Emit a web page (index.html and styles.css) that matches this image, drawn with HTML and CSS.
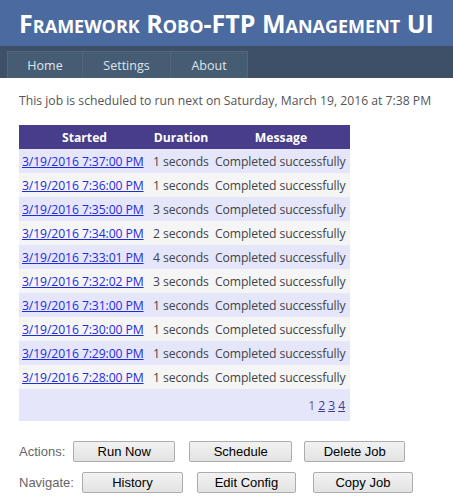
FILE: index.html
```html
<!DOCTYPE html>
<html>
<head>
<meta charset="utf-8">
<link rel="stylesheet" href="styles.css">
</head>
<body>
<div class="header">
  <h1 class="title">Framework Robo-FTP Management UI</h1>
</div>
<div class="navbar">
  <ul class="menu">
    <li><a href="#">Home</a></li>
    <li><a href="#">Settings</a></li>
    <li><a href="#">About</a></li>
  </ul>
</div>
<div class="main">
  <p class="next">This job is scheduled to run next on Saturday, March 19, 2016 at 7:38 PM</p>
  <table class="grid">
    <thead>
      <tr><th class="c1">Started</th><th class="c2">Duration</th><th class="c3">Message</th></tr>
    </thead>
    <tbody>
      <tr class="odd"><td><a href="#">3/19/2016 7:37:00 PM</a></td><td>1 seconds</td><td>Completed successfully</td></tr>
      <tr class="even"><td><a href="#">3/19/2016 7:36:00 PM</a></td><td>1 seconds</td><td>Completed successfully</td></tr>
      <tr class="odd"><td><a href="#">3/19/2016 7:35:00 PM</a></td><td>3 seconds</td><td>Completed successfully</td></tr>
      <tr class="even"><td><a href="#">3/19/2016 7:34:00 PM</a></td><td>2 seconds</td><td>Completed successfully</td></tr>
      <tr class="odd"><td><a href="#">3/19/2016 7:33:01 PM</a></td><td>4 seconds</td><td>Completed successfully</td></tr>
      <tr class="even"><td><a href="#">3/19/2016 7:32:02 PM</a></td><td>3 seconds</td><td>Completed successfully</td></tr>
      <tr class="odd"><td><a href="#">3/19/2016 7:31:00 PM</a></td><td>1 seconds</td><td>Completed successfully</td></tr>
      <tr class="even"><td><a href="#">3/19/2016 7:30:00 PM</a></td><td>1 seconds</td><td>Completed successfully</td></tr>
      <tr class="odd"><td><a href="#">3/19/2016 7:29:00 PM</a></td><td>1 seconds</td><td>Completed successfully</td></tr>
      <tr class="even"><td><a href="#">3/19/2016 7:28:00 PM</a></td><td>1 seconds</td><td>Completed successfully</td></tr>
      <tr class="pager"><td colspan="3"><span>1</span> <a href="#">2</a> <a href="#">3</a> <a href="#">4</a></td></tr>
    </tbody>
  </table>
  <div class="actions">
    <div class="row"><span class="label">Actions:</span><button class="btn b1">Run Now</button><button class="btn b2">Schedule</button><button class="btn b3">Delete Job</button></div>
    <div class="row"><span class="label">Navigate:</span><button class="btn b4">History</button><button class="btn b5">Edit Config</button><button class="btn b6">Copy Job</button></div>
  </div>
</div>
</body>
</html>
```
FILE: styles.css
```css
* { box-sizing: border-box; }
html, body { margin: 0; padding: 0; background: #fff; }
body { font-family: "Open Sans", "Noto Sans", sans-serif; font-size: 12px; color: #505050; }
.header { background: #4b6ba0; height: 46px; display: flex; align-items: center; justify-content: center; }
.title { margin: 0; color: #fff; font-variant: small-caps; font-weight: bold; font-size: 25px; letter-spacing: 0; line-height: 1; padding-top: 1px; }
.navbar { background: #3d5068; height: 32px; padding: 5px 0 0 7px; }
.menu { list-style: none; margin: 0; padding: 0; display: flex; height: 27px; }
.menu li { display: flex; }
.menu a { display: flex; align-items: center; justify-content: center; height: 27px; background: #465c73; border: 1px solid #52677d; border-bottom: none; color: #dde6ee; text-decoration: none; font-size: 12.5px; }
.menu li + li a { border-left: none; }
.menu li:nth-child(1) a { width: 76px; }
.menu li:nth-child(2) a { width: 88px; }
.menu li:nth-child(3) a { width: 77px; }
.main { padding: 0 19px; }
.next { margin: 14px 0 16px; line-height: 17px; font-size: 12.2px; color: #555; white-space: nowrap; letter-spacing: 0; }
.grid { border-collapse: collapse; width: 331px; }
.grid th { background: #483d8b; color: #fff; font-weight: bold; height: 24px; padding: 0; font-size: 12.2px; text-align: center; }
.grid th.c1 { width: 131px; }
.grid th.c2 { width: 62px; }
.grid td { height: 24px; padding: 0 3px; font-size: 12.2px; white-space: nowrap; color: #444; letter-spacing: -0.1px; }
.grid tr.odd td { background: #e6e6fa; }
.grid tr.even td { background: #f5f5f5; }
.grid td a { color: #1e2be0; }
.grid tr.pager td { background: #e6e6fa; height: 32px; text-align: right; padding-right: 5px; color: #666; }
.grid tr.pager a { color: #3c3c94; }
.actions { margin-top: 20px; display: flex; flex-direction: column; gap: 10px; }
.row { display: flex; align-items: center; }
.label { font-family: "Liberation Sans", Arial, sans-serif; font-size: 13px; color: #666; }
.btn { font-family: "Liberation Sans", Arial, sans-serif; font-size: 13px; color: #000; height: 21px; padding: 0; background: linear-gradient(#f2f2f2, #e3e3e3); border: 1px solid #acacac; border-radius: 2px; }
.b1 { width: 102px; margin-left: 8px; }
.b2 { width: 103px; margin-left: 14px; }
.b3 { width: 101px; margin-left: 12px; }
.b4 { width: 101px; margin-left: 8px; }
.b5 { width: 99px; margin-left: 14px; }
.b6 { width: 100px; margin-left: 17px; }
```
